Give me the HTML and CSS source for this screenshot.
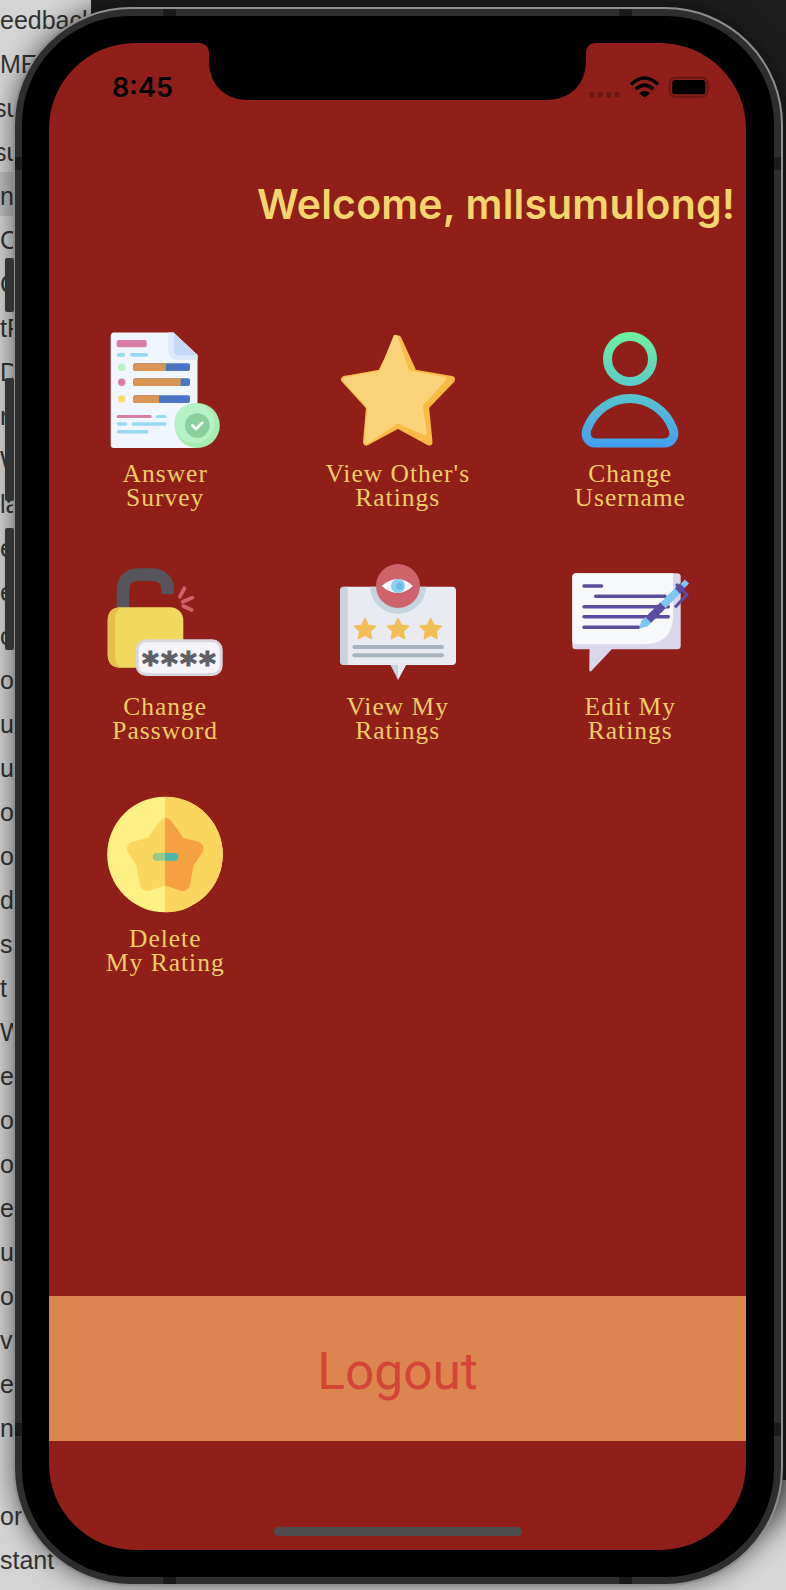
FILE: index.html
```html
<!DOCTYPE html>
<html lang="en">
<head>
<meta charset="utf-8">
<title>Welcome</title>
<link rel="stylesheet" href="styles.css">
</head>
<body>
<div class="desktop">
  <aside class="sidebar">
    <div class="row">eedback</div><div class="row">ME</div><div class="row cut">su</div><div class="row cut">su</div>
    <div class="row selected">n</div><div class="row">C</div><div class="row">C</div><div class="row">tF</div>
    <div class="row">D</div><div class="row">r</div><div class="row">W</div><div class="row">la</div>
    <div class="row">e</div><div class="row">e</div><div class="row">c</div><div class="row">o</div>
    <div class="row">u</div><div class="row">u</div><div class="row">o</div><div class="row">o</div>
    <div class="row">de</div><div class="row">s</div><div class="row">t</div><div class="row">We</div>
    <div class="row">e</div><div class="row">og</div><div class="row">o</div><div class="row">e</div>
    <div class="row">u</div><div class="row">o</div><div class="row">v</div><div class="row">e</div>
    <div class="row">n</div><div class="row"></div><div class="row">or</div><div class="row">stant</div>
  </aside>
  <div class="editor"></div>
</div>

<span class="side-btn btn-a"></span>
<span class="side-btn btn-b"></span>
<span class="side-btn btn-c"></span>

<div class="phone">
  <span class="band band-t1"></span><span class="band band-t2"></span>
  <span class="band band-b1"></span><span class="band band-b2"></span>
  <span class="band band-l1"></span><span class="band band-l2"></span>
  <span class="band band-r1"></span><span class="band band-r2"></span>
  <div class="bezel">
    <main class="screen">
      <svg class="notch" width="400" height="58" viewBox="0 0 400 58" aria-hidden="true">
        <path d="M0 0H398C391 0 388 4 388 11V17C388 42 372 57 348 57H50C27 57 11 42 11 17V11C11 4 8 0 0 0Z" fill="#000"/>
      </svg>

      <header class="status">
        <span class="time">8:45</span>
        <svg class="status-icons" width="124" height="24" viewBox="0 0 124 24" aria-hidden="true">
          <rect x="1.5" y="17" width="5" height="5.4" rx="1.6" fill="#6b1710"/>
          <rect x="9.8" y="17" width="5" height="5.4" rx="1.6" fill="#6b1710"/>
          <rect x="18.2" y="17" width="5" height="5.4" rx="1.6" fill="#6b1710"/>
          <rect x="26.5" y="17" width="5" height="5.4" rx="1.6" fill="#6b1710"/>
          <path d="M43 9.5Q56.5 -3.5 70 9.5" fill="none" stroke="#000" stroke-width="3.4"/>
          <path d="M47.5 14.3Q56.5 6 65.5 14.3" fill="none" stroke="#000" stroke-width="3.4"/>
          <path d="M51 18.3Q56.5 13.5 62 18.3L56.5 22.8Z" fill="#000"/>
          <rect x="81.8" y="2.7" width="37.6" height="19" rx="5.5" fill="none" stroke="#6b1710" stroke-width="2"/>
          <rect x="84.2" y="5" width="33" height="14.2" rx="2.5" fill="#000"/>
          <path d="M121.5 9.5Q123.5 12 121.5 15Z" fill="#6b1710"/>
        </svg>
      </header>

      <h1 class="welcome">Welcome, mllsumulong!</h1>

      <section class="menu">
        <div class="item">
          <svg class="ico" viewBox="0 0 116 116" aria-hidden="true">
            <path d="M7 0.5H66.5L90.5 23V112.5Q90.5 116 87 116H7Q3.7 116 3.7 112.5V4Q3.7 .5 7 .5Z" fill="#eff6ff"/>
            <path d="M61.3 .5H66.5L90.5 23V28H72Q61.3 28 61.3 17Z" fill="#dce8fb"/>
            <path d="M67 1L90 23.5H72Q67 23.5 67 18Z" fill="#c5d8f9"/>
            <rect x="9.7" y="8" width="30" height="7.3" rx="2" fill="#d67ea3"/>
            <rect x="9.7" y="21" width="8.3" height="3.7" rx="1.8" fill="#97d9f5"/>
            <rect x="23" y="21" width="18" height="3.7" rx="1.8" fill="#97d9f5"/>
            <circle cx="14.7" cy="35.3" r="3.7" fill="#b4f2c3"/>
            <circle cx="14.7" cy="50.3" r="3.7" fill="#d67ea3"/>
            <circle cx="14.7" cy="67" r="3.7" fill="#f6dc68"/>
            <rect x="26.3" y="31.3" width="56.7" height="7.7" rx="2" fill="#4a76c5"/>
            <path d="M28.3 31.3H59V39H28.3Q26.3 39 26.3 37V33.3Q26.3 31.3 28.3 31.3Z" fill="#da9451"/>
            <rect x="26.3" y="46.3" width="56.7" height="7.7" rx="2" fill="#4a76c5"/>
            <path d="M28.3 46.3H73.7V54H28.3Q26.3 54 26.3 52V48.3Q26.3 46.3 28.3 46.3Z" fill="#da9451"/>
            <rect x="26.3" y="63.3" width="56.7" height="7.7" rx="2" fill="#4a76c5"/>
            <path d="M28.3 63.3H52V71H28.3Q26.3 71 26.3 69V65.3Q26.3 63.3 28.3 63.3Z" fill="#da9451"/>
            <rect x="9.7" y="83" width="35" height="3" rx="1.5" fill="#d67ea3"/>
            <rect x="49" y="83" width="10.7" height="3" rx="1.5" fill="#97d9f5"/>
            <rect x="9.7" y="90.3" width="10.6" height="3.4" rx="1.7" fill="#97d9f5"/>
            <rect x="24.7" y="90.3" width="35" height="3.4" rx="1.7" fill="#97d9f5"/>
            <rect x="9.7" y="98" width="31.6" height="3.4" rx="1.7" fill="#97d9f5"/>
            <circle cx="90.3" cy="93.5" r="22.5" fill="#a6eeb0"/>
            <circle cx="87.5" cy="91" r="20" fill="#b6f2c3"/>
            <circle cx="90.3" cy="93.5" r="12.3" fill="#8bcf9a"/>
            <path d="M85.5 93.5L89 97L95.3 90.8" fill="none" stroke="#fff" stroke-width="2.8" stroke-linecap="round" stroke-linejoin="round"/>
          </svg>
          <p class="label">Answer<br>Survey</p>
        </div>

        <div class="item">
          <svg class="ico" viewBox="0 0 116 116" aria-hidden="true">
            <path d="M58 7L73.500 41L111.500 47.500L85.500 74.500L89 110L58 93L26.500 110L29.500 75L4.500 47.500L41 41Z" fill="#f8bb45" stroke="#f8bb45" stroke-width="7" stroke-linejoin="round"/>
            <path d="M55.500 5L67.500 40.500L104 47L80.500 73L84.500 101L58 89L26.500 110L29.500 75L4.500 47.500L41 41Z" fill="#fad27a" stroke="#fad27a" stroke-width="4.500" stroke-linejoin="round"/>
          </svg>
          <p class="label">View Other's<br>Ratings</p>
        </div>

        <div class="item">
          <svg class="ico" viewBox="0 0 116 116" aria-hidden="true">
            <defs>
              <linearGradient id="userGrad" gradientUnits="userSpaceOnUse" x1="0" y1="0" x2="0" y2="116">
                <stop offset="0" stop-color="#6ff2a0"/>
                <stop offset="1" stop-color="#429ef2"/>
              </linearGradient>
            </defs>
            <circle cx="58" cy="27" r="22.5" fill="none" stroke="url(#userGrad)" stroke-width="9"/>
            <path d="M24 111H92C100 111 103.500 104 101 97C94 78 76 66.500 58 66.500C40 66.500 22 78 15 97C12.500 104 16 111 24 111Z" fill="none" stroke="url(#userGrad)" stroke-width="9"/>
          </svg>
          <p class="label">Change<br>Username</p>
        </div>

        <div class="item">
          <svg class="ico" viewBox="0 0 116 116" aria-hidden="true">
            <path d="M16 46V26Q16 9.600 32 9.600H44Q60.800 9.600 60.800 26V29.300" fill="none" stroke="#56555b" stroke-width="12.600"/>
            <rect x="0.700" y="42.300" width="75.600" height="60.400" rx="13" fill="#f0d95c"/>
            <path d="M14.700 42.300H13.700Q.7 42.300 .7 55.300V89.700Q.7 102.700 13.700 102.700H14.700Q8 100 8 90V55Q8 45 14.700 42.300Z" fill="#e4c04a"/>
            <path d="M73 31.700L77.300 23.300M75.700 36.700L85.300 32.700M76.300 41L84.700 45" fill="none" stroke="#d0606a" stroke-width="3.800" stroke-linecap="round"/>
            <rect x="30.200" y="75.800" width="84" height="33.700" rx="9" fill="#f5f5f9" stroke="#d7d7dd" stroke-width="3"/>
            <text class="stars" x="35" y="108.700">****</text>
          </svg>
          <p class="label">Change<br>Password</p>
        </div>

        <div class="item">
          <svg class="ico" viewBox="0 0 116 116" aria-hidden="true">
            <defs>
              <clipPath id="cardClip"><rect x="0" y="21.700" width="116" height="78.300" rx="4"/></clipPath>
              <path id="miniStar" d="M0 -10.500L3.300 -3.700L10.600 -2.800L5.300 2.300L6.500 9.500L0 6L-6.500 9.500L-5.300 2.300L-10.600 -2.800L-3.300 -3.700Z"/>
            </defs>
            <path d="M50 99L58 115V99Z" fill="#c6d4de"/>
            <path d="M58 99V115L66.700 99Z" fill="#e8ecf2"/>
            <rect x="0" y="21.700" width="116" height="78.300" rx="4" fill="#e8ecf2"/>
            <path d="M4 21.700H7.700V100H4Q0 100 0 96V25.700Q0 21.700 4 21.700Z" fill="#c6d4de"/>
            <circle cx="58" cy="21" r="28" fill="#c6d4de" clip-path="url(#cardClip)"/>
            <circle cx="58" cy="21" r="22" fill="#ce636c"/>
            <path d="M41.500 21Q58 7 73 21Q58 35 41.500 21Z" fill="#f7f8fb"/>
            <circle cx="58" cy="21" r="7" fill="#8ccdf0"/>
            <circle cx="59.500" cy="21" r="3.500" fill="#6fb8e8"/>
            <use href="#miniStar" x="25" y="64" fill="#f4be56" stroke="#f4be56" stroke-width="1.500" stroke-linejoin="round"/>
            <use href="#miniStar" x="58" y="64" fill="#f4be56" stroke="#f4be56" stroke-width="1.500" stroke-linejoin="round"/>
            <use href="#miniStar" x="90.700" y="64" fill="#f4be56" stroke="#f4be56" stroke-width="1.500" stroke-linejoin="round"/>
            <rect x="12.300" y="80" width="91.700" height="4" rx="2" fill="#a7b4bf"/>
            <rect x="12.300" y="88.300" width="91.700" height="4" rx="2" fill="#a7b4bf"/>
          </svg>
          <p class="label">View My<br>Ratings</p>
        </div>

        <div class="item">
          <svg class="ico" viewBox="0 0 116 116" aria-hidden="true">
            <path d="M17.500 84L17.300 105Q17.800 107.500 19.800 105.500L40 84Z" fill="#dad7ea"/>
            <rect x="0.300" y="8.300" width="108.400" height="76" rx="3.500" fill="#dad7ea"/>
            <path d="M4 8.300H101V50Q101 79.300 72 79.300H4Q.3 79.300 .3 75.600V12Q.3 8.300 4 8.300Z" fill="#f6f8fa"/>
            <path d="M12 21H29.600M23.700 31.300H93M12 41.700H96.300M12 51.700H96.300M12 62.300H66.500" fill="none" stroke="#5a4da0" stroke-width="3.400" stroke-linecap="round"/>
            <path d="M103 42.300L115 29.800L104 19" fill="none" stroke="#5a4da0" stroke-width="3"/>
            <path d="M67 64L69.500 55.500L75.500 61Z" fill="#7cc6f5"/>
            <path d="M71.500 59.500L76.800 54.300" stroke="#7cc6f5" stroke-width="8" fill="none"/>
            <path d="M76.300 54.800L91.300 40" stroke="#5a4da0" stroke-width="8" fill="none"/>
            <path d="M91 40.300L106 25.500" stroke="#7cc6f5" stroke-width="7.500" fill="none"/>
            <path d="M105.500 26L111 20.500" stroke="#5a4da0" stroke-width="7.500" fill="none"/>
            <path d="M110.500 21L115 16.500" stroke="#7cc6f5" stroke-width="6" fill="none"/>
          </svg>
          <p class="label">Edit My<br>Ratings</p>
        </div>

        <div class="item">
          <svg class="ico" viewBox="0 0 116 116" aria-hidden="true">
            <defs>
              <clipPath id="rightHalf"><rect x="58" y="0" width="58" height="116"/></clipPath>
              <path id="bigStar" d="M58.500 28L72 47L89.500 51.500L80 66L76 87L58 81L40 87L36 66L27 51.500L45 47Z" stroke-width="14" stroke-linejoin="round"/>
            </defs>
            <circle cx="58" cy="57.500" r="57.800" fill="#fef083"/>
            <circle cx="58" cy="57.500" r="57.800" fill="#fbd65f" clip-path="url(#rightHalf)"/>
            <use href="#bigStar" fill="#fbd65f" stroke="#fbd65f"/>
            <g clip-path="url(#rightHalf)"><use href="#bigStar" fill="#f5a041" stroke="#f5a041"/></g>
            <rect x="45.700" y="56" width="25.600" height="7.700" rx="3.800" fill="#96c98c"/>
            <path d="M58 56H67.500Q71.300 56 71.300 59.800Q71.300 63.700 67.500 63.700H58Z" fill="#4fb6a8"/>
          </svg>
          <p class="label">Delete<br>My Rating</p>
        </div>
      </section>

      <button class="logout" type="button">Logout</button>
      <div class="home-wrap"><span class="home"></span></div>
    </main>
  </div>
</div>
</body>
</html>
```
FILE: styles.css
```css
* { box-sizing: border-box; }
html, body { margin: 0; padding: 0; }
body {
  position: relative;
  width: 786px;
  height: 1590px;
  overflow: hidden;
  background: #d8d8d8;
  font-family: "Liberation Sans", Arial, sans-serif;
}
.desktop { display: flex; height: 1590px; }
.sidebar {
  width: 91px;
  margin-top: -4px;
  background: #d4d4d4;
  color: #333;
  font-size: 25px;
  overflow: hidden;
}
.row { height: 44px; line-height: 48px; white-space: nowrap; }
.cut { text-indent: -6px; }
.selected { background: #bdbdbd; }
.editor { flex: 1; height: 1480px; background: #1e1e1e; box-shadow: 0 30px 40px #1e1e1e; }

.side-btn { position: absolute; left: 5px; width: 9px; background: #333; border-radius: 2px; z-index: 1; }
.btn-a { top: 258px; height: 54px; }
.btn-b { top: 378px; height: 123px; }
.btn-c { top: 528px; height: 122px; }

.phone {
  position: absolute;
  left: 13px;
  top: 7px;
  width: 770px;
  height: 1579px;
  padding: 7px;
  background: #2e2e2e;
  border: 2px solid #8f8f8f;
  border-radius: 118px;
  box-shadow: 0 0 26px rgba(0, 0, 0, 0.55);
}
.band { position: absolute; background: #1b1b1b; }
.band-t1, .band-t2, .band-b1, .band-b2 { width: 13px; height: 7px; }
.band-l1, .band-l2, .band-r1, .band-r2 { width: 7px; height: 13px; }
.band-t1 { left: 148px; top: 0; }
.band-t2 { left: 604px; top: 0; }
.band-b1 { left: 148px; bottom: 0; }
.band-b2 { left: 604px; bottom: 0; }
.band-l1 { left: 0; top: 148px; }
.band-l2 { left: 0; top: 1414px; }
.band-r1 { right: 0; top: 148px; }
.band-r2 { right: 0; top: 1414px; }

.bezel {
  height: 100%;
  padding: 27px 28px 27px 27px;
  background: #000;
  border-radius: 108px;
}
.screen {
  position: relative;
  display: flex;
  flex-direction: column;
  height: 100%;
  overflow: hidden;
  background: #8f1f18;
  border-radius: 86px;
}
.notch { position: absolute; left: 149px; top: 0; display: block; }

.status {
  display: flex;
  justify-content: space-between;
  align-items: flex-start;
  height: 136px;
  padding: 32px 34px 0 63px;
}
.time {
  margin-top: 1px;
  font-family: Inter, "Liberation Sans", sans-serif;
  font-weight: 600;
  font-size: 27px;
  line-height: 24px;
  color: #000;
}
.status-icons { display: block; }

.welcome {
  margin: 0;
  padding-right: 11px;
  height: 153px;
  text-align: right;
  font-family: Inter, "Liberation Sans", sans-serif;
  font-weight: 600;
  font-size: 41px;
  line-height: 50px;
  letter-spacing: 0.15px;
  color: #f3d56c;
  white-space: nowrap;
}

.menu {
  display: grid;
  grid-template-columns: repeat(3, 232.5px);
  grid-auto-rows: 232.5px;
}
.item { display: flex; flex-direction: column; align-items: center; }
.ico { display: block; width: 116px; height: 116px; flex: none; overflow: visible; }
.label {
  margin: 14px 0 0;
  text-align: center;
  font-family: "Liberation Serif", "Times New Roman", serif;
  font-size: 25.5px;
  line-height: 24px;
  letter-spacing: 1px;
  color: #efcd68;
}
.stars {
  font-family: "DejaVu Sans", sans-serif;
  font-weight: 700;
  font-size: 32px;
  letter-spacing: 2.3px;
  fill: #605f66;
  stroke: #605f66;
  stroke-width: 1.2px;
}

.logout {
  display: block;
  flex: none;
  width: 100%;
  height: 145px;
  margin-top: auto;
  border: 0;
  padding: 5px 0 0;
  background: #dd854f;
  font-family: Roboto, "Liberation Sans", sans-serif;
  font-size: 51.5px;
  color: #d44437;
}
.home-wrap { flex: none; height: 109px; padding-top: 86px; display: flex; justify-content: center; }
.home { display: block; width: 248px; height: 9px; background: #4d4d4d; border-radius: 4.5px; }
```
